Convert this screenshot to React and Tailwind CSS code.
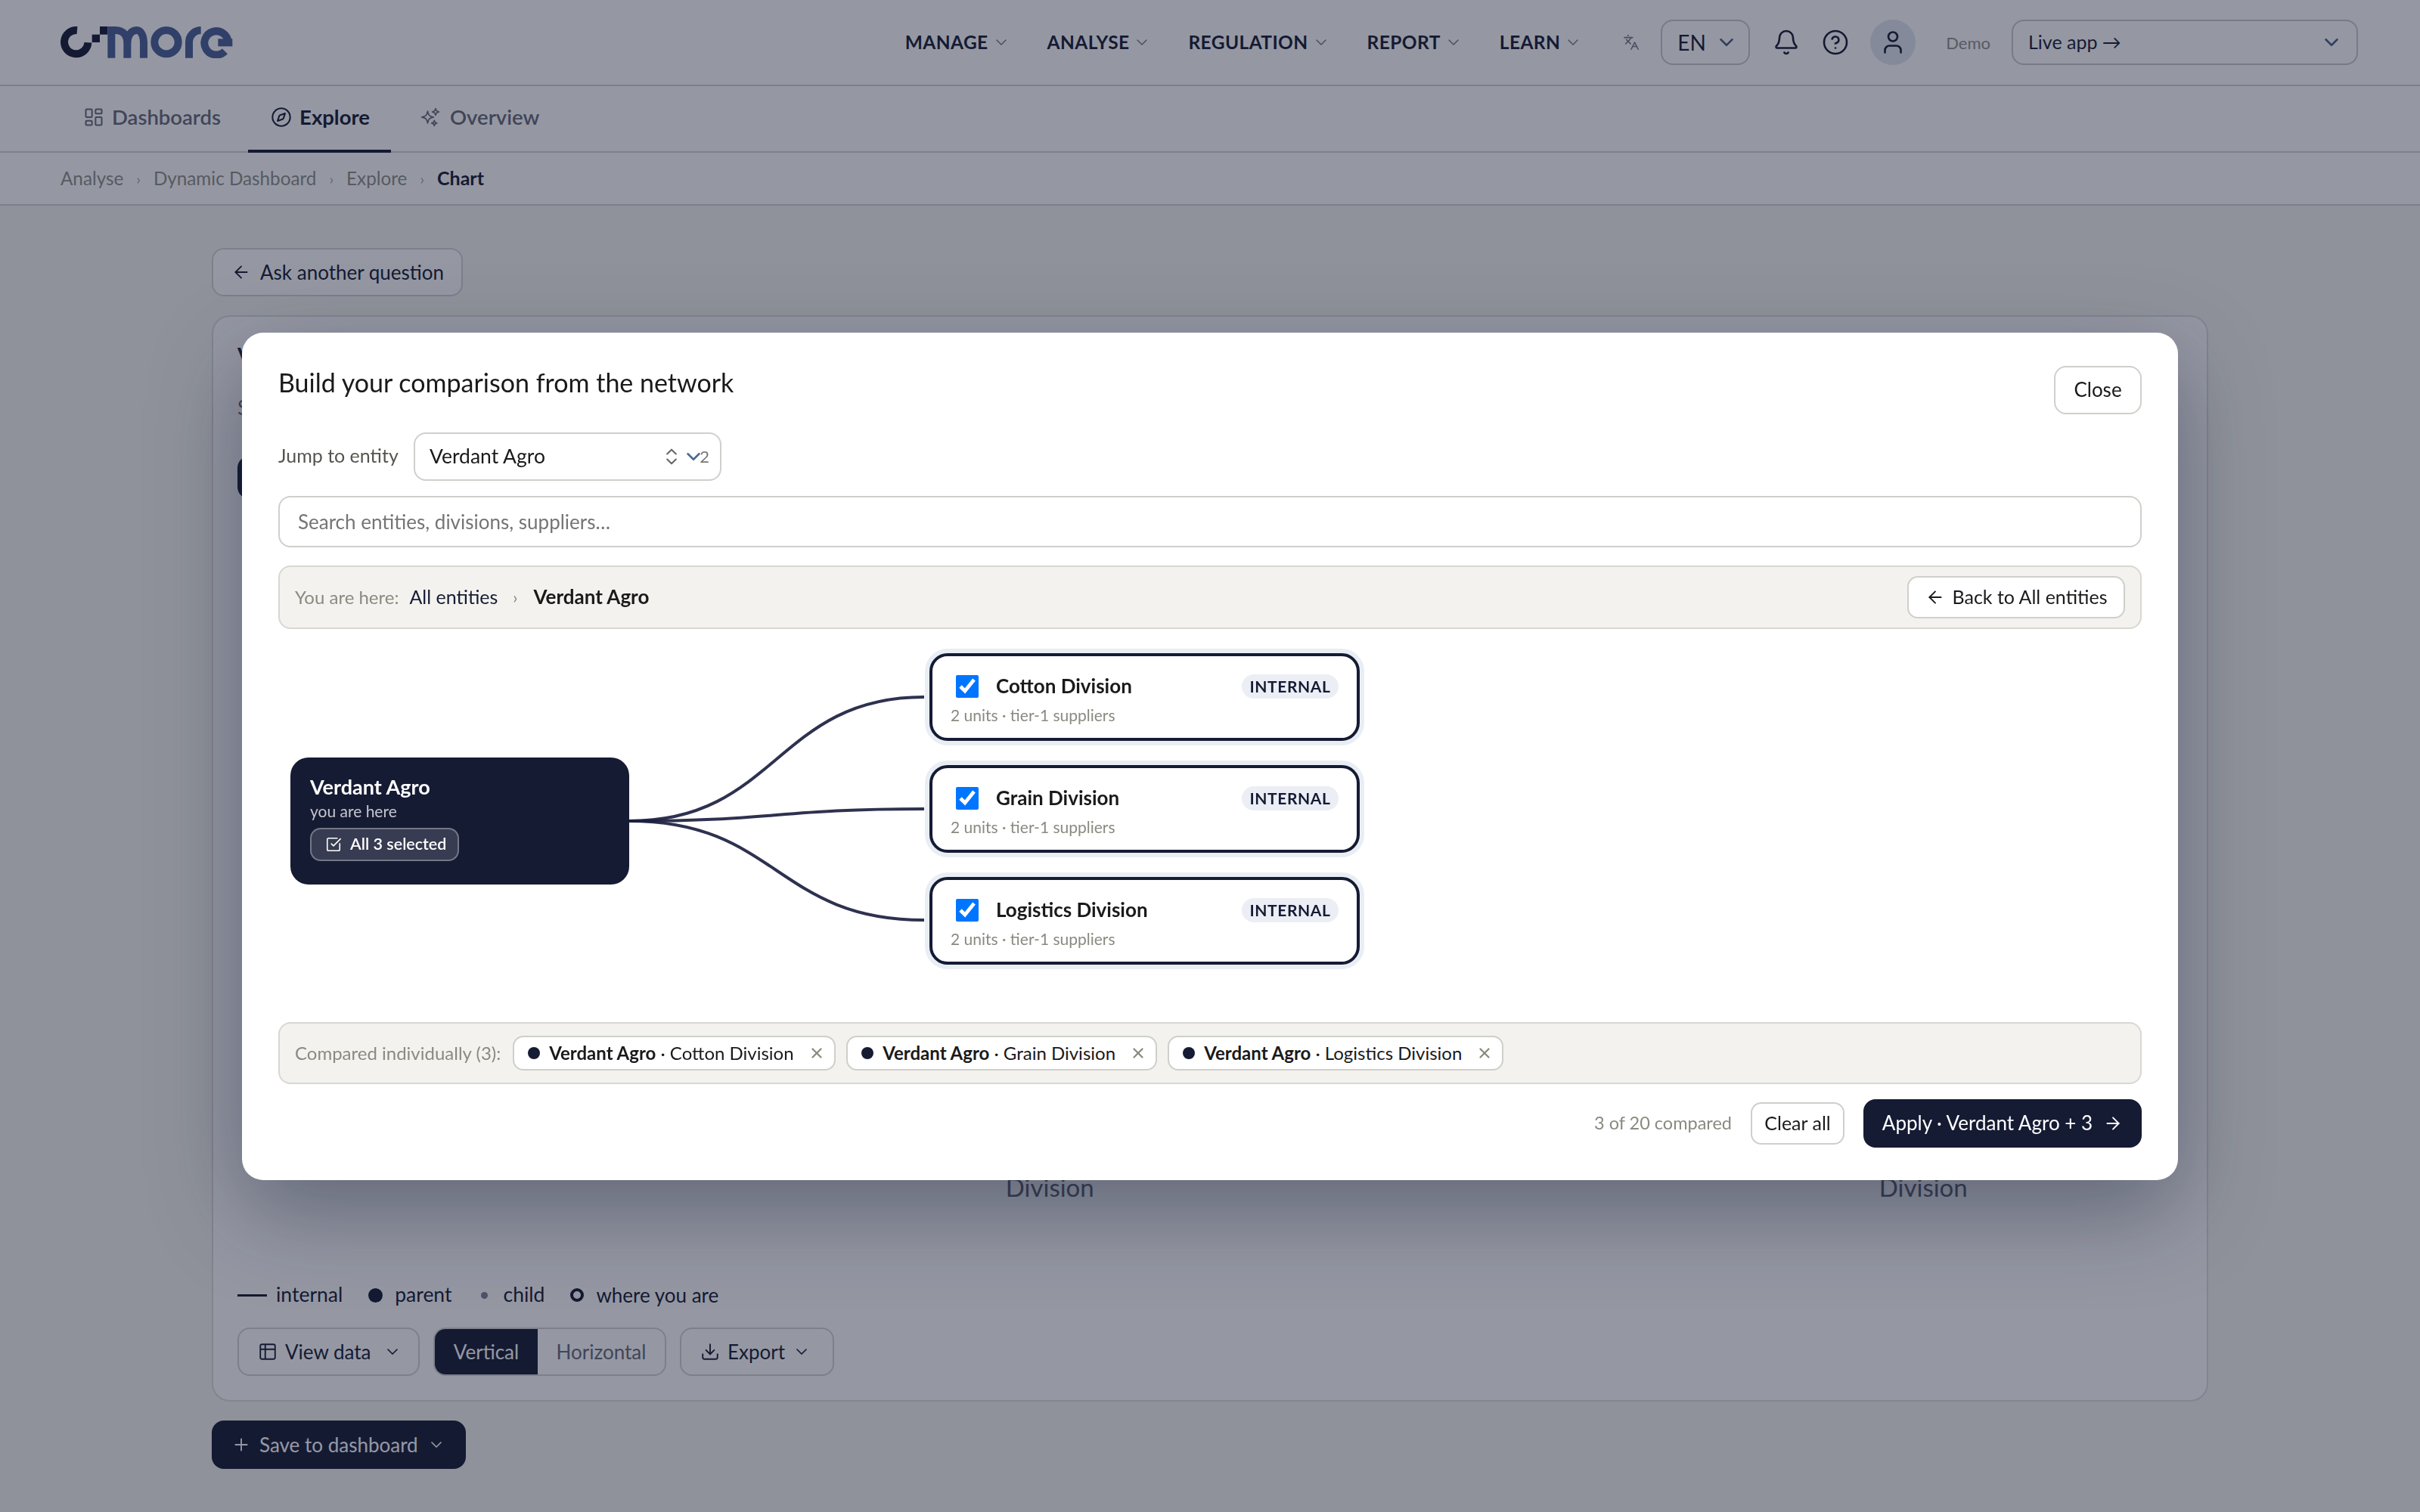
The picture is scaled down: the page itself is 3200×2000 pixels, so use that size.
import {
  ArrowLeft,
  ArrowRight,
  Bell,
  ChevronDown,
  ChevronsUpDown,
  CircleHelp,
  Compass,
  Download,
  Languages,
  LayoutDashboard,
  Plus,
  SquareCheckBig,
  Table2,
  User,
  X,
} from "lucide-react";
import { HiOutlineSparkles } from "react-icons/hi2";

const navItems = ["MANAGE", "ANALYSE", "REGULATION", "REPORT", "LEARN"];
const divisions = ["Cotton Division", "Grain Division", "Logistics Division"];

function Logo() {
  return (
    <svg viewBox="60 108 690 125" className="h-[41.7px] w-[230px]" fill="none" strokeWidth="30">
      <g stroke="#161b34">
        <path d="M126 123 A47 47 0 1 0 169 172" />
      </g>
      <rect x="185" y="140" width="31" height="31" fill="#161b34" />
      <rect x="216" y="108" width="31" height="32" fill="#161b34" />
      <g stroke="#4a6095">
        <path d="M262 233 V108 M262 123 H278 C310 123 325 145 325 175 V233 M325 175 C325 145 340 123 362 123 C380 123 390 145 390 175 V233" />
        <circle cx="480" cy="170" r="47" />
        <path d="M570 233 V170 A47 47 0 0 1 617 123" />
        <path d="M725 172 A47 47 0 1 0 712 206" />
        <path d="M685 172 H742" />
      </g>
    </svg>
  );
}

function Header() {
  return (
    <header className="flex h-[114px] items-center border-b-2 border-[#d4d4d2] bg-white pl-[80px] pr-[82px]">
      <Logo />
      <nav className="ml-auto flex items-center gap-[49px]">
        {navItems.map((item) => (
          <div key={item} className="flex items-center gap-[5px] text-[24.5px] font-bold tracking-[0.4px] text-[#161b34]">
            {item}
            <ChevronDown className="size-[24px] text-[#777a88]" strokeWidth={1.5} />
          </div>
        ))}
      </nav>
      <Languages className="ml-[54px] size-[22px] text-[#777a88]" strokeWidth={1.75} />
      <div className="ml-[28px] flex h-[60px] w-[118px] items-center justify-between rounded-[16px] border-2 border-[#c8c9cc] pl-[20px] pr-[14px] text-[28px] text-[#161b34]">
        EN
        <ChevronDown className="size-[30px] text-[#4a6085]" strokeWidth={2} />
      </div>
      <Bell className="ml-[30px] size-[36px] text-[#161b34]" strokeWidth={1.75} />
      <CircleHelp className="ml-[29px] size-[36px] text-[#161b34]" strokeWidth={1.75} />
      <div className="ml-[28px] flex size-[60px] items-center justify-center rounded-full bg-[#e2e6ee]">
        <User className="size-[36px] text-[#161b34]" strokeWidth={1.75} />
      </div>
      <span className="ml-[40px] text-[22px] text-[#8f8f87]">Demo</span>
      <div className="ml-[28px] flex h-[60px] w-[458px] items-center justify-between rounded-[16px] border-2 border-[#c8c9cc] pl-[20px] pr-[18px] text-[25px] text-[#161b34]">
        Live app →
        <ChevronDown className="size-[30px] text-[#4a6085]" strokeWidth={2} />
      </div>
    </header>
  );
}

function Tabs() {
  return (
    <div className="flex h-[88px] items-stretch border-b-2 border-[#d4d4d2] bg-white pb-[5px] pl-[80px] text-[27.5px]">
      <div className="flex items-center gap-[10px] pl-[30px] pr-[36px] font-semibold text-[#666977]">
        <LayoutDashboard className="size-[28px]" strokeWidth={1.75} />
        Dashboards
      </div>
      <div className="-mb-[7px] flex items-center gap-[10px] border-b-[4px] border-[#161b34] pb-[3px] pl-[30px] pr-[28px] font-bold text-[#161b34]">
        <Compass className="size-[28px]" strokeWidth={1.75} />
        Explore
      </div>
      <div className="flex items-center gap-[12px] pl-[38px] font-semibold text-[#666977]">
        <HiOutlineSparkles className="size-[28px]" />
        Overview
      </div>
    </div>
  );
}

function Crumbs() {
  return (
    <div className="flex h-[70px] items-center gap-[17px] border-b-2 border-[#d4d4d2] bg-white pl-[80px] text-[24.25px] text-[#8f8f87]">
      <span>Analyse</span>
      <span className="text-[20px] text-[#a9a9a2]">›</span>
      <span>Dynamic Dashboard</span>
      <span className="text-[20px] text-[#a9a9a2]">›</span>
      <span>Explore</span>
      <span className="text-[20px] text-[#a9a9a2]">›</span>
      <span className="text-[25px] font-bold text-[#161b34]">Chart</span>
    </div>
  );
}

function OutlineButton({ children, className }) {
  return (
    <div className={`flex h-[64px] items-center rounded-[16px] border-2 border-[#d4d4d2] text-[26px] text-[#161b34] ${className}`}>
      {children}
    </div>
  );
}

function PageBehind() {
  return (
    <main className="pl-[280px] pr-[280px] pt-[56px]">
      <OutlineButton className="w-[332px] gap-[12px] bg-white pl-[24px]">
        <ArrowLeft className="size-[26px]" strokeWidth={1.75} />
        Ask another question
      </OutlineButton>
      <section className="mt-[25px] rounded-[24px] border-2 border-[#dcdcda] bg-white px-[32px] pb-[32px] pt-[31px]">
        <h2 className="text-[30px] font-bold leading-[40px] text-[#161b34]">Verdant Agro by division</h2>
        <p className="mt-[30px] h-[36px] text-[26px] text-[#666977]">Split by internal division</p>
        <div className="mt-[47px] h-[57px] w-[220px] rounded-[16px] bg-[#161b34]" />
        <div className="flex h-[930px] items-end pl-[208px] pr-[54px]">
          <div className="grid w-full grid-cols-4 text-center text-[33px] leading-[40px] text-[#5b5e6c]">
            <span>Verdant Agro</span>
            <span>Cotton<br />Division</span>
            <span>Grain</span>
            <span>Logistics<br />Division</span>
          </div>
        </div>
        <div className="mt-[107px] flex h-[32px] items-center text-[26.5px] text-[#161b34]">
          <span className="h-[3px] w-[39px] bg-[#161b34]" />
          <span className="ml-[12px]">internal</span>
          <span className="ml-[34px] size-[19px] rounded-full bg-[#161b34]" />
          <span className="ml-[16px]">parent</span>
          <span className="ml-[39px] size-[9px] rounded-full bg-[#7c8094]" />
          <span className="ml-[20px]">child</span>
          <span className="ml-[34px] size-[18px] rounded-full border-[4px] border-[#161b34]" />
          <span className="ml-[16px] text-[26px]">where you are</span>
        </div>
        <div className="mt-[27px] flex gap-[18px]">
          <OutlineButton className="w-[241px] gap-[10px] pl-[25px]">
            <Table2 className="size-[26px]" strokeWidth={1.75} />
            View data
            <ChevronDown className="ml-[6px] size-[24px]" strokeWidth={1.75} />
          </OutlineButton>
          <div className="flex h-[64px] w-[308px] items-stretch overflow-hidden rounded-[16px] border-2 border-[#d4d4d2] text-[26px]">
            <span className="flex w-[136px] items-center justify-center bg-[#161b34] text-white">Vertical</span>
            <span className="flex flex-1 items-center justify-center text-[#666977]">Horizontal</span>
          </div>
          <OutlineButton className="w-[204px] gap-[10px] pl-[25px]">
            <Download className="size-[26px]" strokeWidth={1.75} />
            Export
            <ChevronDown className="size-[24px]" strokeWidth={1.75} />
          </OutlineButton>
        </div>
      </section>
      <div className="mt-[25px] flex h-[64px] w-[336px] items-center gap-[11px] rounded-[16px] bg-[#161b34] pl-[26px] text-[26px] text-white">
        <Plus className="size-[26px]" strokeWidth={1.75} />
        Save to dashboard
        <ChevronDown className="ml-[1px] size-[24px]" strokeWidth={1.75} />
      </div>
    </main>
  );
}

function Connectors() {
  return (
    <svg width="397" height="412" viewBox="0 0 397 412" fill="none" className="shrink-0">
      <g stroke="#1c2140" strokeOpacity="0.92" strokeWidth="4">
        <path d="M0 222 C195 222 195 58 390 58" />
        <path d="M0 222 C195 222 195 206 390 206" />
        <path d="M0 222 C195 222 195 353 390 353" />
      </g>
    </svg>
  );
}

function DivisionCard({ name }) {
  return (
    <div className="h-[116px] w-[569px] rounded-[24px] border-[4px] border-[#161b34] bg-white px-[24px] pt-[24px] shadow-[0_0_0_6px_#e9eef5]">
      <div className="flex h-[32px] items-center">
        <input type="checkbox" checked readOnly className="ml-[7px] size-[30px] accent-[#0075ff]" />
        <span className="ml-[23px] text-[26px] font-bold text-[#1a1a1a]">{name}</span>
        <span className="ml-auto flex h-[32px] w-[128px] items-center justify-center rounded-full bg-[#eceef5] text-[21px] font-bold tracking-[0.6px] text-[#161b34]">
          INTERNAL
        </span>
      </div>
      <p className="mt-[9px] text-[21px] leading-[26px] text-[#8a8a80]">2 units · tier-1 suppliers</p>
    </div>
  );
}

function Chip({ name, width }) {
  return (
    <div className={`flex h-[46px] items-center rounded-[14px] border-2 border-[#cfcfcb] bg-white pl-[18px] text-[24px] text-[#1a1a1a] ${width}`}>
      <span className="size-[16px] shrink-0 rounded-full bg-[#161b34]" />
      <span className="ml-[12px] whitespace-nowrap">
        <b className="font-bold">Verdant Agro</b> · {name}
      </span>
      <X className="ml-auto mr-[12px] size-[22px] text-[#8a8a80]" strokeWidth={2.5} />
    </div>
  );
}

function Modal() {
  return (
    <div className="w-[2560px] rounded-[28px] bg-white px-[48px] pb-[43px] pt-[44px] shadow-[0_40px_120px_rgba(21,27,52,0.4)]">
      <div className="flex items-start justify-between">
        <h1 className="text-[34px] font-normal leading-[44px] text-[#1a1a1a]">Build your comparison from the network</h1>
        <div className="flex h-[64px] w-[116px] items-center justify-center rounded-[16px] border-2 border-[#cfcfcb] text-[26px] text-[#1a1a1a]">Close</div>
      </div>
      <div className="mt-[24px] flex items-center">
        <span className="-mt-[2px] w-[179px] text-[25px] text-[#55554f]">Jump to entity</span>
        <div className="flex h-[64px] w-[407px] items-center rounded-[16px] border-2 border-[#cfcfcb] pl-[19px] pr-[14px] text-[26.5px] text-[#1a1a1a]">
          Verdant Agro
          <ChevronsUpDown className="ml-auto size-[28px] text-[#666]" strokeWidth={1.75} />
          <ChevronDown className="size-[30px] text-[#4a6a90]" strokeWidth={2} />
          <span className="-ml-[7px] text-[22px] text-[#777]">2</span>
        </div>
      </div>
      <input
        placeholder="Search entities, divisions, suppliers…"
        className="mt-[20px] block h-[68px] w-full rounded-[16px] border-2 border-[#cfcfcb] px-[24px] text-[26px] outline-none placeholder:text-[#757575]"
      />
      <div className="mt-[24px] flex h-[84px] items-center rounded-[16px] border-2 border-[#d8d7d2] bg-[#f3f2ee] pl-[20px] pr-[20px] text-[25px]">
        <span className="text-[24px] text-[#8a8a80]">You are here:</span>
        <span className="ml-[14px] text-[#161b34]">All entities</span>
        <span className="ml-[20px] text-[22px] text-[#8a8a80]">›</span>
        <span className="ml-[21px] text-[26px] font-bold text-[#1a1a1a]">Verdant Agro</span>
        <div className="ml-auto flex h-[56px] w-[288px] items-center justify-center gap-[10px] rounded-[14px] border-2 border-[#cfcfcb] bg-white text-[#1a1a1a]">
          <ArrowLeft className="size-[26px]" strokeWidth={1.75} />
          Back to All entities
        </div>
      </div>
      <div className="ml-[16px] mt-[32px] flex h-[488px] items-start">
        <div className="mt-[138px] h-[168px] w-[448px] shrink-0 rounded-[24px] bg-[#161b34] pl-[26px] pt-[21px] text-white">
          <p className="text-[27px] font-bold leading-[36px]">Verdant Agro</p>
          <p className="text-[21px] leading-[28px] text-white/75">you are here</p>
          <div className="mt-[8px] flex h-[44px] w-[197px] items-center gap-[11px] rounded-[14px] border-2 border-white/30 bg-white/15 pl-[18px] text-[21.5px] font-semibold">
            <SquareCheckBig className="size-[22px]" strokeWidth={1.75} />
            All 3 selected
          </div>
        </div>
        <Connectors />
        <div className="flex flex-col gap-[32px]">
          {divisions.map((name) => (
            <DivisionCard key={name} name={name} />
          ))}
        </div>
      </div>
      <div className="flex h-[82px] items-center gap-[14px] rounded-[16px] border-2 border-[#d8d7d2] bg-[#f3f2ee] pl-[20px] text-[24px] text-[#8a8a80]">
        <span className="mr-[2px]">Compared individually (3):</span>
        <Chip name="Cotton Division" width="w-[427px]" />
        <Chip name="Grain Division" width="w-[411px]" />
        <Chip name="Logistics Division" width="w-[444px]" />
      </div>
      <div className="mt-[20px] flex items-center justify-end">
        <span className="text-[23.5px] text-[#8a8a80]">3 of 20 compared</span>
        <div className="ml-[25px] flex h-[56px] w-[124px] items-center justify-center rounded-[14px] border-2 border-[#cfcfcb] text-[25px] text-[#1a1a1a]">Clear all</div>
        <div className="ml-[25px] flex h-[64px] w-[368px] items-center justify-center gap-[14px] rounded-[16px] bg-[#161b34] text-[26px] text-white">
          Apply · Verdant Agro + 3
          <ArrowRight className="size-[26px]" strokeWidth={1.75} />
        </div>
      </div>
    </div>
  );
}

export default function App() {
  return (
    <div className="min-h-screen bg-[#f6f5f0] [font-family:Lato,sans-serif]">
      <Header />
      <Tabs />
      <Crumbs />
      <PageBehind />
      {/* dim layer + dialog */}
      <div className="fixed inset-0 flex items-center justify-center bg-[#151b34]/45">
        <Modal />
      </div>
    </div>
  );
}
